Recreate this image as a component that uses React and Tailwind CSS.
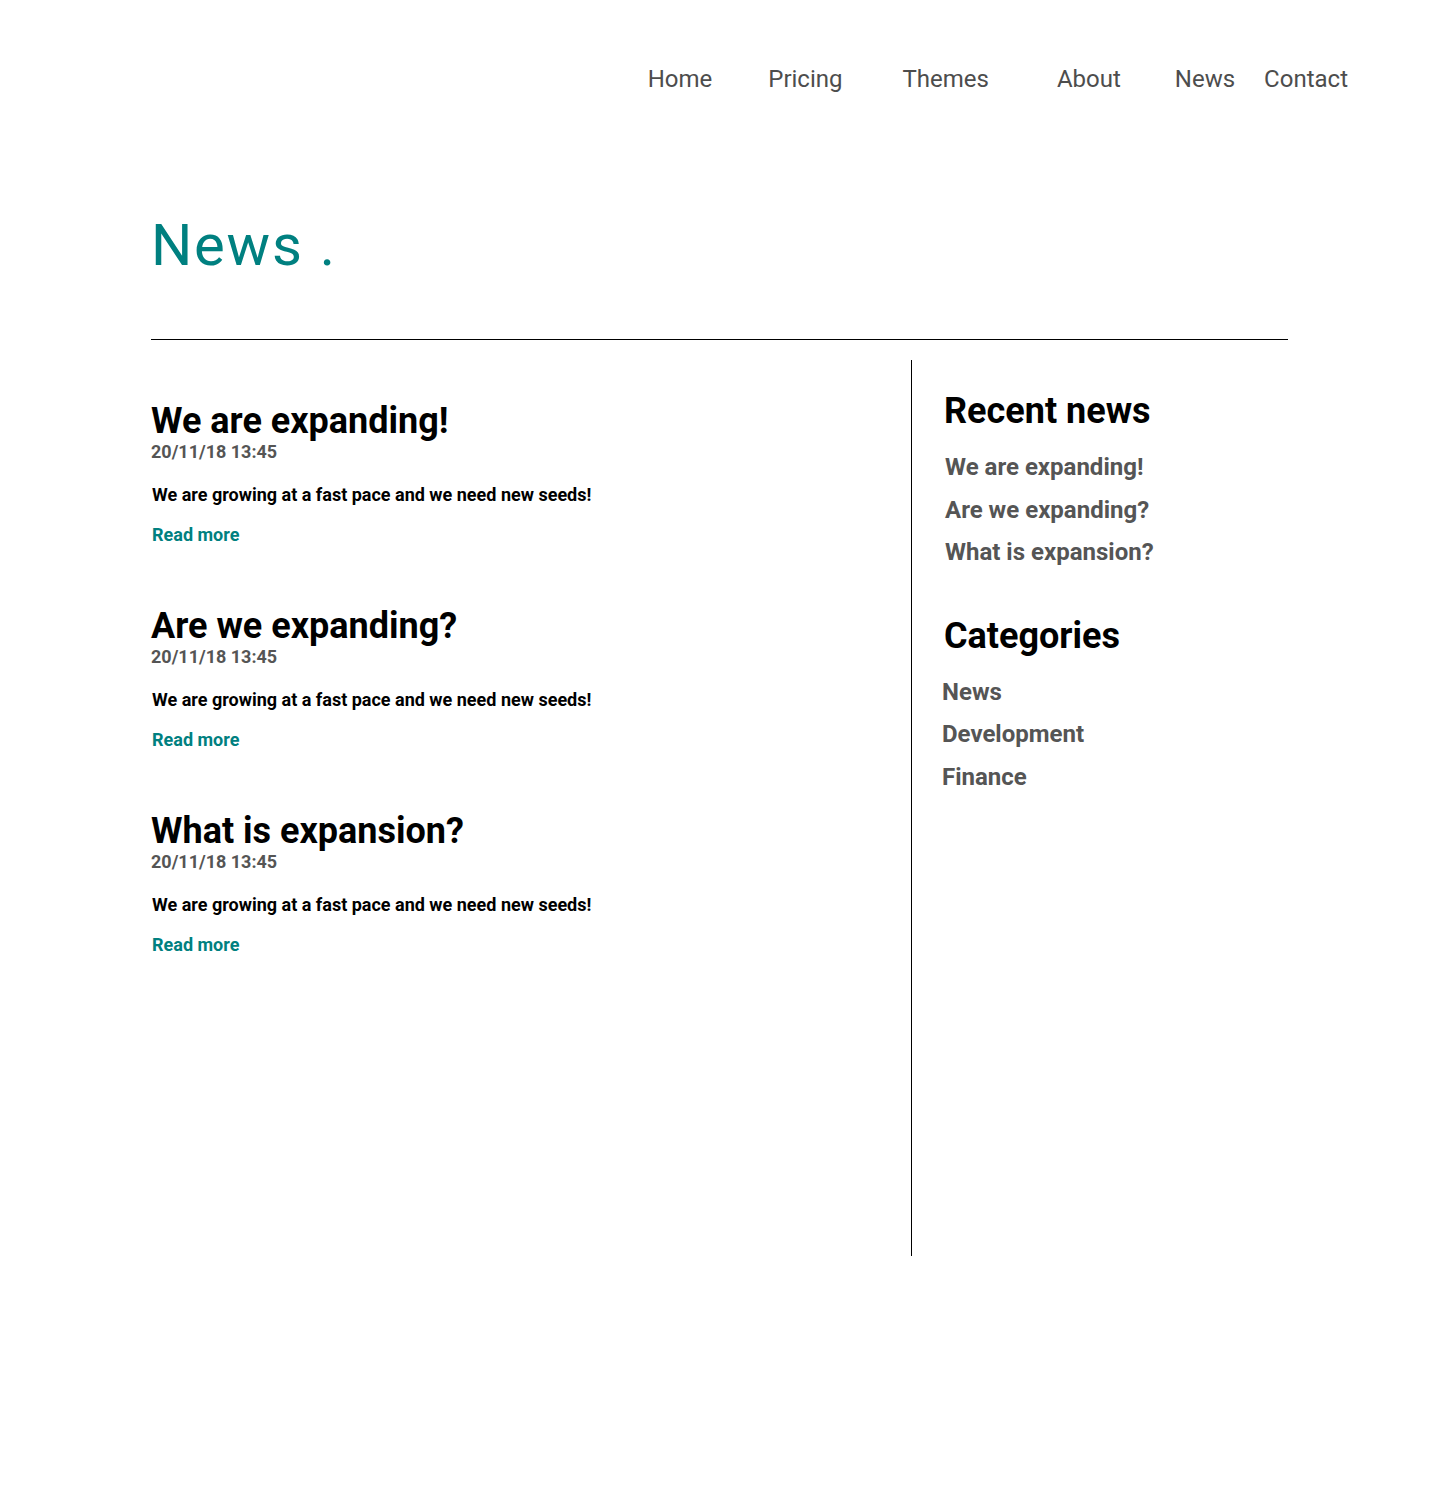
const navItems = [
  { label: 'Home', cls: 'ml-0' },
  { label: 'Pricing', cls: 'ml-[56px]' },
  { label: 'Themes', cls: 'ml-[60px]' },
  { label: 'About', cls: 'ml-[68px]' },
  { label: 'News', cls: 'ml-[54px]' },
  { label: 'Contact', cls: 'ml-[29px]' },
];

const posts = [
  { title: 'We are expanding!', date: '20/11/18 13:45' },
  { title: 'Are we expanding?', date: '20/11/18 13:45' },
  { title: 'What is expansion?', date: '20/11/18 13:45' },
];

const categories = ['News', 'Development', 'Finance'];

export default function App() {
  return (
    <div className="min-h-[1500px] bg-white font-['Roboto',sans-serif] text-black">
      {/* Nav */}
      <nav className="flex justify-end pr-[92px] pt-[62px]">
        {navItems.map((item) => (
          <a key={item.label} className={`${item.cls} text-[24px] leading-[34px] text-[#4d4d4d]`}>
            {item.label}
          </a>
        ))}
      </nav>

      <div className="px-[151px] pr-[152px]">
        {/* Title */}
        <h1 className="mt-[115px] text-[58px] leading-[68px] tracking-[0.03em] text-[#008080]">
          News .
        </h1>

        <hr className="mt-[60px] border-0 border-t border-black" />

        <div className="mt-[20px] flex">
          {/* Posts */}
          <div className="w-[760px] pt-[40px]">
            {posts.map((post) => (
              <article key={post.title} className="mb-[60px]">
                <h2 className="text-[36px] font-bold leading-[42px]">{post.title}</h2>
                <p className="text-[18px] font-bold leading-[20px] text-[#555555]">{post.date}</p>
                <p className="ml-[1px] mt-[23px] text-[18px] font-bold leading-[20px]">
                  We are growing at a fast pace and we need new seeds!
                </p>
                <a className="ml-[1px] mt-[20px] block text-[18px] font-bold leading-[20px] text-[#008080]">
                  Read more
                </a>
              </article>
            ))}
          </div>

          {/* Sidebar */}
          <aside className="h-[896px] flex-1 border-l border-black pl-[32px] pt-[30px]">
            <h3 className="text-[36px] font-bold leading-[42px]">Recent news</h3>
            <ul className="ml-[1px] mt-[14px]">
              {posts.map((post) => (
                <li key={post.title} className="text-[24px] font-bold leading-[42.5px] text-[#555555]">
                  {post.title}
                </li>
              ))}
            </ul>
            <h3 className="mt-[41px] text-[36px] font-bold leading-[42px]">Categories</h3>
            <ul className="mt-[14px] -ml-[2px]">
              {categories.map((cat) => (
                <li key={cat} className="text-[24px] font-bold leading-[42.5px] text-[#555555]">
                  {cat}
                </li>
              ))}
            </ul>
          </aside>
        </div>
      </div>
    </div>
  );
}
